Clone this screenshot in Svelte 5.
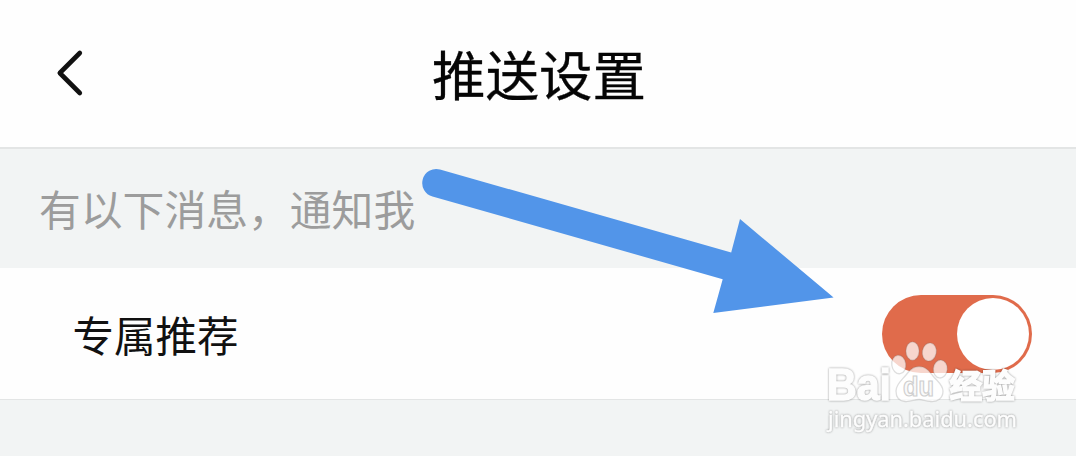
<script>
  const title = '推送设置';
  const hint = '有以下消息，通知我';
  const items = [{ label: '专属推荐', enabled: true }];
</script>

<main class="screen">
  <header>
    <svg class="back" viewBox="0 0 30 50" aria-label="返回">
      <path d="M24.8 5 4.8 25l20 20" />
    </svg>
    <h1>{title}</h1>
  </header>
  <p class="hint">{hint}</p>
  {#each items as item}
    <section class="row">
      <span class="label">{item.label}</span>
      <span class="toggle" class:on={item.enabled}><i></i></span>
    </section>
  {/each}

  <svg class="overlay" viewBox="0 0 1076 456" aria-hidden="true">
    <path class="arrow" d="M440 169.5 731.2 252.4 740 219 833.6 297.5 713.3 313 722.7 279.2 432.5 196.5A13.8 13.8 0 0 1 440 169.5Z" />
    <g class="paw">
      <ellipse cx="898.8" cy="364.5" rx="7" ry="9.3" transform="rotate(-8 898.8 364.5)" />
      <ellipse cx="912.5" cy="351" rx="6.6" ry="9.2" />
      <ellipse cx="929.3" cy="352" rx="7" ry="9.1" transform="rotate(10 929.3 352)" />
      <ellipse cx="940.3" cy="369" rx="7" ry="9" transform="rotate(5 940.3 369)" />
      <path d="M919 366.5C926 366.5 929 371 933 376C938 382 943 385 943 391C943 398 938 402 931 401.5C925 401 923 399.5 919 399.5C914 399.5 911 402 905 401.5C899 401 896 397 896 391C896 384 902 380 906 375C910 370 913 366.5 919 366.5Z" />
    </g>
    <g class="words">
      <text class="latin" x="827" y="399.5" textLength="64" lengthAdjust="spacingAndGlyphs">Bai</text>
      <text class="cn" x="949.5" y="397.5" textLength="65.5" lengthAdjust="spacingAndGlyphs">经验</text>
      <text class="url" x="828" y="426.5" textLength="189" lengthAdjust="spacingAndGlyphs">jingyan.baidu.com</text>
    </g>
    <text class="du" x="903" y="395.5" textLength="31" lengthAdjust="spacingAndGlyphs">du</text>
  </svg>
</main>

<style>
  :global(body) { margin: 0; }
  .screen {
    position: relative;
    width: 1076px;
    height: 456px;
    overflow: hidden;
    background: #f2f4f4;
    font-family: "Noto Sans CJK SC", sans-serif;
  }
  header {
    box-sizing: border-box;
    height: 149px;
    display: grid;
    grid-template-columns: 86px 1fr 86px;
    align-items: center;
    background: #fefefe;
    border-bottom: 2px solid #e3e5e5;
  }
  .back { width: 30px; height: 50px; margin: 0 0 1px 55px; }
  .back path { fill: none; stroke: #111; stroke-width: 4.6; stroke-linecap: round; stroke-linejoin: round; }
  h1 {
    margin: 0 0 1px 2px;
    font-size: 53.5px;
    line-height: 80px;
    font-weight: 400;
    color: #050505;
    -webkit-text-stroke: .3px #050505;
    text-align: center;
  }
  .hint {
    box-sizing: border-box;
    height: 119px;
    margin: 0;
    padding: 0 39px;
    line-height: 119px;
    font-size: 41.8px;
    color: #9c9c9c;
  }
  .row {
    box-sizing: border-box;
    height: 132px;
    padding: 0 44px 0 72.5px;
    display: flex;
    align-items: center;
    justify-content: space-between;
    background: #fefefe;
    border-bottom: 1px solid #e3e5e5;
  }
  .label { font-size: 41.5px; line-height: 60px; color: #111; }
  .toggle {
    box-sizing: border-box;
    width: 150px;
    height: 78px;
    padding: 3px;
    display: flex;
    border-radius: 39px;
    background: #ccc;
  }
  .toggle.on { justify-content: flex-end; background: #e06b4b; }
  .toggle i { width: 72px; height: 72px; border-radius: 50%; background: #fff; }
  .overlay { position: absolute; inset: 0; width: 1076px; height: 456px; pointer-events: none; }
  .arrow { fill: #5295e9; }
  .paw > * { fill: rgba(255, 255, 255, .72); stroke: rgba(110, 110, 110, .22); stroke-width: 1.3; }
  .words { filter: drop-shadow(0 0 1px rgba(0, 0, 0, .4)); }
  .words text { fill: #fdfdfd; stroke: #fdfdfd; stroke-width: 1.5; }
  .latin { font: 700 44px "Liberation Sans", sans-serif; }
  .du { font: 700 27px "Liberation Sans", sans-serif; fill: #fafafa; stroke: #cfcfcf; stroke-width: 1.2; }
  .cn { font: 700 33px "Noto Sans CJK SC", sans-serif; }
  .words .url { font: 400 22px "Noto Sans", sans-serif; stroke-width: .4; }
</style>
